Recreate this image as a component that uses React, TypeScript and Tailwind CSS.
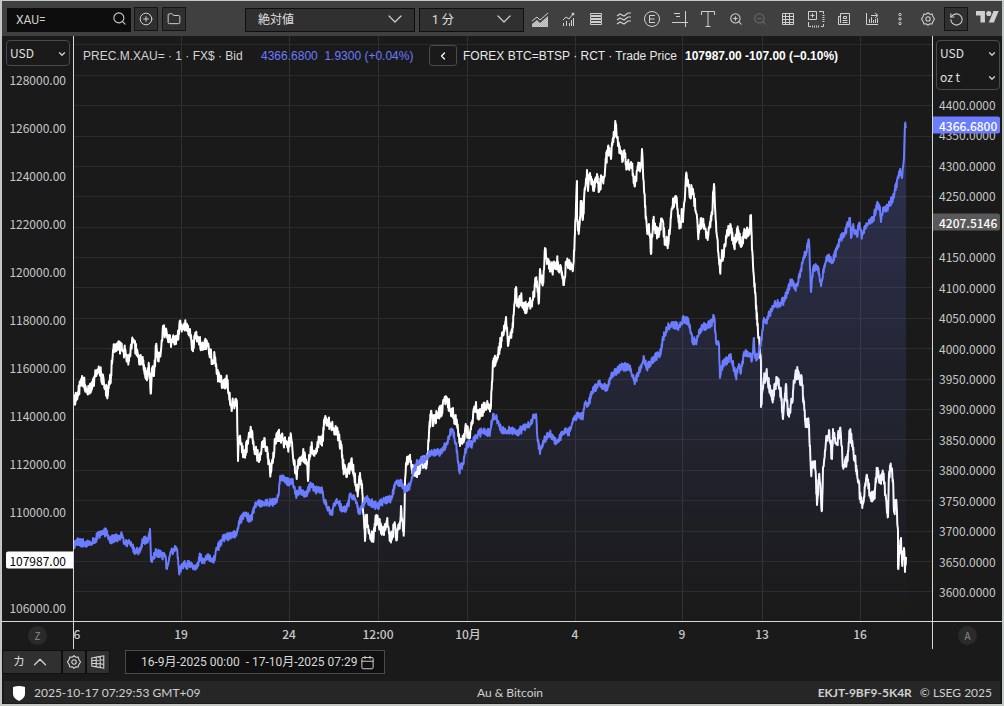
import { useMemo, useState } from "react";
import type { ReactNode } from "react";
import { Calendar, ChevronDown, ChevronLeft, ChevronUp, CirclePlus, Folder, RotateCcw, Search, ZoomIn, ZoomOut } from "lucide-react";

type Point = [x: number, y: number];

// Plot space used by both series and the grid
const PLOT = { x: 74, y: 36, width: 858, height: 585 };

const BTC: Point[] = [
  [74, 403], [78, 392], [83, 380], [87, 390], [92, 389], [97, 370], [101, 374], [104, 384], [108, 394], [111, 375], [113, 350], [119, 347], [125, 352], [129, 361],
  [133, 339], [138, 357], [144, 365], [146, 379], [149, 366], [151, 393], [152, 368], [154, 376], [156, 346], [158, 361], [161, 350], [163, 326], [168, 341], [177, 340],
  [180, 326], [187, 324], [191, 335], [192, 350], [195, 335], [202, 346], [207, 343], [212, 360], [215, 357], [217, 374], [223, 385], [227, 381], [231, 405], [237, 404],
  [238, 461], [239, 438], [244, 455], [251, 431], [255, 450], [260, 460], [263, 441], [267, 447], [270, 472], [273, 461], [275, 439], [280, 435], [288, 448],
  [290, 438], [292, 442], [294, 465], [297, 475], [299, 460], [303, 454], [307, 462], [308, 481], [309, 455], [312, 447], [315, 453], [320, 437], [323, 441], [324, 420],
  [328, 422], [332, 428], [337, 431], [341, 447], [344, 471], [348, 471], [352, 463], [354, 475], [358, 492], [360, 473], [362, 484], [363, 512], [365, 541], [366, 515],
  [369, 530], [373, 538], [376, 519], [380, 525], [384, 535], [387, 520], [390, 541], [395, 525], [396, 538], [400, 522], [401, 506], [403, 531], [404, 531], [405, 480],
  [407, 457], [411, 461], [413, 471], [418, 472], [422, 461], [427, 464], [429, 433], [431, 411], [433, 423], [438, 413], [442, 410], [446, 399], [452, 412], [457, 423],
  [460, 446], [463, 440], [466, 429], [470, 438], [473, 417], [476, 402], [478, 416], [483, 409], [487, 405], [491, 405], [493, 361], [497, 360], [499, 350], [503, 332],
  [506, 317], [508, 346], [512, 332], [514, 310], [516, 287], [517, 306], [521, 298], [524, 310], [528, 305], [533, 300], [536, 279], [539, 302], [540, 269], [543, 283],
  [545, 248], [548, 263], [553, 270], [557, 262], [562, 272], [564, 285], [566, 262], [571, 264], [573, 270], [575, 233], [577, 181], [577, 219], [579, 231], [581, 202],
  [583, 218], [585, 190], [587, 170], [588, 191], [590, 173], [593, 189], [597, 174], [599, 190], [602, 177], [604, 178], [606, 161], [608, 147], [611, 159], [613, 138],
  [616, 124], [618, 146], [622, 158], [624, 151], [627, 167], [631, 162], [635, 186], [637, 171], [641, 164], [642, 149], [644, 190], [647, 230], [649, 224], [651, 254],
  [653, 220], [658, 236], [662, 219], [665, 242], [668, 243], [672, 208], [676, 196], [680, 228], [682, 211], [683, 222], [686, 175], [690, 193], [693, 189], [696, 213],
  [698, 234], [702, 220], [708, 237], [712, 213], [714, 184], [717, 237], [720, 271], [722, 250], [723, 259], [727, 231], [731, 228], [734, 246], [738, 231], [741, 247],
  [745, 233], [749, 234], [751, 215], [752, 250], [755, 293], [758, 333], [761, 363], [761, 407], [764, 379], [767, 375], [772, 400], [777, 380], [781, 393], [783, 419],
  [786, 384], [788, 415], [792, 403], [794, 382], [797, 371], [802, 383], [805, 420], [809, 425], [811, 472], [815, 461], [817, 505], [819, 475], [822, 510], [823, 468],
  [826, 441], [829, 430], [832, 459], [833, 429], [837, 443], [840, 428], [843, 465], [847, 462], [850, 430], [853, 450], [857, 470], [860, 496], [863, 504], [867, 475],
  [870, 496], [874, 499], [877, 471], [880, 483], [883, 474], [886, 499], [888, 517], [889, 474], [891, 468], [893, 480], [894, 512], [896, 500], [898, 530], [898, 567],
  [901, 538], [902, 562], [904, 548], [905, 572], [906, 557],
];

const GOLD: Point[] = [
  [74, 549], [75, 541], [82, 543], [90, 543], [95, 541], [98, 534], [103, 534], [107, 531], [110, 540], [122, 536], [125, 542], [130, 544], [135, 551], [139, 552],
  [143, 541], [148, 539], [150, 529], [151, 561], [156, 552], [165, 557], [167, 569], [171, 551], [177, 549], [179, 572], [182, 565], [190, 565], [196, 569], [200, 556],
  [203, 561], [207, 557], [213, 562], [217, 549], [223, 539], [229, 536], [237, 533], [239, 521], [245, 515], [251, 519], [255, 506], [263, 502], [272, 503], [278, 497],
  [280, 478], [287, 481], [293, 483], [296, 495], [300, 489], [306, 496], [310, 486], [318, 491], [322, 489], [325, 503], [332, 515], [334, 505], [338, 502], [343, 511],
  [348, 506], [350, 496], [355, 498], [359, 514], [362, 507], [366, 499], [370, 502], [377, 506], [383, 502], [392, 498], [395, 483], [402, 484], [405, 491], [410, 485],
  [414, 470], [418, 461], [427, 459], [429, 453], [437, 453], [443, 451], [448, 440], [452, 429], [456, 443], [459, 471], [463, 463], [467, 444], [472, 444], [477, 435],
  [483, 431], [490, 433], [493, 414], [497, 420], [502, 430], [508, 430], [517, 432], [523, 429], [530, 424], [536, 414], [537, 433], [540, 454], [543, 441], [550, 434],
  [557, 443], [563, 433], [570, 431], [573, 419], [578, 416], [583, 417], [585, 403], [588, 406], [592, 392], [595, 388], [600, 384], [607, 389], [611, 376], [617, 370],
  [622, 367], [629, 367], [635, 381], [640, 370], [644, 358], [647, 367], [652, 360], [660, 354], [663, 339], [667, 328], [673, 324], [680, 327], [684, 318], [689, 323],
  [693, 342], [697, 340], [701, 328], [705, 326], [712, 323], [714, 316], [716, 341], [719, 344], [720, 378], [723, 363], [731, 357], [736, 377], [739, 364], [741, 372],
  [744, 352], [750, 353], [752, 360], [754, 338], [755, 358], [758, 357], [762, 335], [764, 318], [767, 320], [773, 306], [784, 301], [791, 281], [795, 289], [799, 278],
  [803, 261], [809, 241], [811, 292], [813, 268], [818, 268], [821, 286], [824, 268], [827, 256], [832, 262], [838, 247], [840, 239], [845, 233], [850, 218], [851, 238],
  [853, 227], [857, 236], [859, 223], [862, 236], [867, 225], [873, 220], [877, 204], [880, 207], [881, 222], [883, 208], [887, 208], [892, 200], [895, 190], [898, 178],
  [900, 169], [902, 178], [904, 157], [905, 125], [906, 128],
];

const GRID_X = [181, 289, 378, 467, 575, 682, 762, 860];
const GRID_Y = [44, 75, 105, 136, 166, 196, 227, 257, 287, 318, 348, 379, 409, 439, 470, 500, 531, 561, 591];
const TIME_LABELS: [number, string][] = [
  [77, "6"], [181, "19"], [289, "24"], [378, "12:00"], [468, "10月"], [575, "4"], [682, "9"], [762, "13"], [860, "16"],
];

const BTC_LAST = 107987;
const GOLD_LAST = 4366.68;
const GOLD_CURSOR = 4207.5146;
const BTC_TICKS = Array.from({ length: 12 }, (_, i) => 128000 - i * 2000);
const GOLD_TICKS = Array.from({ length: 17 }, (_, i) => 4400 - i * 50);

// Adds minute-level wiggle between the key points of a series
function densify(points: Point[], amp: number, seed: number): Point[] {
  let s = seed;
  const rand = () => {
    s = (s * 16807) % 2147483647;
    return s / 2147483647 - 0.5;
  };
  const out: Point[] = [];
  for (let i = 0; i < points.length - 1; i++) {
    const [x0, y0] = points[i];
    const [x1, y1] = points[i + 1];
    out.push([x0, y0]);
    const steps = Math.round((x1 - x0) * 3);
    for (let k = 1; k < steps; k++) {
      const t = k / steps;
      out.push([x0 + (x1 - x0) * t, y0 + (y1 - y0) * t + rand() * amp]);
    }
  }
  out.push(points[points.length - 1]);
  return out;
}

const toPath = (points: Point[]) => "M" + points.map(([x, y]) => `${x.toFixed(1)} ${y.toFixed(1)}`).join("L");

function Glyph({ children, size = 18 }: { children: ReactNode; size?: number }) {
  return (
    <svg width={size} height={size} viewBox="0 0 18 18" fill="none" stroke="currentColor" strokeWidth="1" aria-hidden="true">
      {children}
    </svg>
  );
}

function GearIcon() {
  return (
    <Glyph size={16}>
      <path d="M9 2l2 1.6 2.6-.2.8 2.5L16.3 9l-1.9 3.1-.8 2.5-2.6-.2L9 16l-2-1.6-2.6.2-.8-2.5L1.7 9l1.9-3.1.8-2.5 2.6.2z" strokeWidth="1.2" />
      <circle cx="9" cy="9" r="2.5" strokeWidth="1.2" />
    </Glyph>
  );
}

const TOOLS: { label: string; icon: ReactNode }[] = [
  {
    label: "Chart type",
    icon: (
      <Glyph>
        <defs>
          <pattern id="dots" width="2" height="2" patternUnits="userSpaceOnUse">
            <rect width="1" height="1" fill="#d0d0d0" />
            <rect x="1" y="1" width="1" height="1" fill="#d0d0d0" />
          </pattern>
        </defs>
        <path d="M1 11l5-4 3 3 8-7" />
        <path d="M1 14l5-4 3 3 8-7v11H1z" fill="url(#dots)" stroke="none" />
      </Glyph>
    ),
  },
  {
    label: "Indicators",
    icon: (
      <Glyph>
        <path d="M4.5 16v-3M7.5 16v-5M10.5 16v-3M12.500 16v-6M14.5 16V8" />
        <path d="M4 10l3-3 3 2 4-5" />
        <circle cx="14" cy="4" r="1" fill="currentColor" />
      </Glyph>
    ),
  },
  {
    label: "Rows",
    icon: (
      <Glyph>
        <path d="M3.5 3.5h11v2h-11zM3.5 6.5h11v2h-11zM3.5 9.5h11v2h-11zM3.5 12.5h11v2h-11z" />
      </Glyph>
    ),
  },
  {
    label: "Compare",
    icon: (
      <Glyph>
        <path d="M2 6l3-2 4 2 4-3h3M2 10l3-2 4 2 4-3h3M2 14l3-2 4 2 4-3h3" strokeWidth="1.2" />
      </Glyph>
    ),
  },
  {
    label: "Events",
    icon: (
      <Glyph>
        <circle cx="9" cy="9" r="7.5" />
        <path d="M12 5.5H6.5v7H12M6.5 9h5" />
      </Glyph>
    ),
  },
  {
    label: "Levels",
    icon: (
      <Glyph>
        <path d="M1 12.5h16M14.5 1v16M3 3.5h6M5 6.5h4" />
      </Glyph>
    ),
  },
  {
    label: "Text",
    icon: (
      <Glyph>
        <path d="M2.5 5V1.500h13V5M9 1.5v15M6.5 16.5h5" />
      </Glyph>
    ),
  },
  { label: "Zoom in", icon: <ZoomIn size={14} strokeWidth={1.8} /> },
  { label: "Zoom out", icon: <ZoomOut size={14} strokeWidth={1.8} /> },
  {
    label: "Table",
    icon: (
      <Glyph>
        <path d="M3.5 3.5h11v11h-11zM3.5 6.5h11M3.5 9.5h11M3.5 12.5h11M6.5 3.5v11M10.5 3.5v11" />
      </Glyph>
    ),
  },
  {
    label: "Add pane",
    icon: (
      <Glyph>
        <path d="M1.5 1.5h8v8h-8zM5.5 3.500v4M3.500 5.500h4M12 1.5h4.5V4M1.500 12v4.500H4M14 16.500h2.500V14" />
        <path d="M16.500 5v8M5 16.500h8" strokeDasharray="1 1" strokeWidth="2" />
      </Glyph>
    ),
  },
  {
    label: "News",
    icon: (
      <Glyph>
        <path d="M5.5 3.5h9v11h-11v-8h2M5.5 3.5v9.500M8.5 6.5h3v2h-3zM7.5 10.5h5M7.5 12.5h5" />
      </Glyph>
    ),
  },
  {
    label: "Export chart",
    icon: (
      <Glyph>
        <path d="M3.5 3v11.5H15M6.5 13V9M8.5 13V7M10.5 13v-3M12.5 13V9M14.5 13V8M8 5.5h6M12 3l3 2.5-3 2.500" />
      </Glyph>
    ),
  },
  {
    label: "More",
    icon: (
      <Glyph>
        <circle cx="9" cy="4.500" r="1.200" />
        <circle cx="9" cy="9" r="1.200" />
        <circle cx="9" cy="13.500" r="1.200" />
      </Glyph>
    ),
  },
  { label: "Settings", icon: <GearIcon /> },
];

function ToolbarSelect({ label, value, className }: { label: string; value: string; className: string }) {
  return (
    <div className={`relative h-6 ${className}`}>
      <select aria-label={label} className="h-full w-full appearance-none border border-[#0f0f0f] bg-[#303030] pl-3 text-xs text-[#e0e0e0] outline-none">
        <option>{value}</option>
      </select>
      <ChevronDown size={24} strokeWidth={1.2} className="pointer-events-none absolute top-0 right-2 text-[#d0d0d0]" />
    </div>
  );
}

function UnitSelect({ label, value }: { label: string; value: string }) {
  return (
    <div className="relative h-6">
      <select aria-label={label} className="h-full w-full appearance-none bg-transparent pl-[3px] text-xs text-[#e0e0e0] outline-none">
        <option>{value}</option>
      </select>
      <ChevronDown size={10} strokeWidth={3} className="pointer-events-none absolute top-2 right-[2px] text-[#d0d0d0]" />
    </div>
  );
}

function Toolbar() {
  const [symbol, setSymbol] = useState("XAU=");
  const boxed = "flex h-6 w-6 items-center justify-center border border-[#141414] bg-[#303030]";

  return (
    <header className="flex h-[35px] shrink-0 items-start bg-[#404040] pt-[6px] pl-[5px] text-[#d0d0d0]">
      <div className="relative h-6 w-[124px]">
        <input
          aria-label="Symbol"
          value={symbol}
          onChange={(e) => setSymbol(e.target.value)}
          className="h-full w-full bg-[#0d0d0d] pl-[9px] text-xs text-[#d0d0d0] outline-none"
        />
        <Search size={15} strokeWidth={1.7} className="pointer-events-none absolute top-1 right-1" />
      </div>
      <button aria-label="Add symbol" className={`ml-[3px] ${boxed}`}>
        <CirclePlus size={14} strokeWidth={1.7} />
      </button>
      <button aria-label="Open" className={`ml-1 ${boxed}`}>
        <Folder size={14} strokeWidth={1.7} />
      </button>
      <ToolbarSelect label="Scale" value="絶対値" className="ml-[59px] w-[170px]" />
      <ToolbarSelect label="Interval" value="1 分" className="ml-1 w-[105px]" />
      <div className="ml-[2px] flex flex-1 items-center">
        {TOOLS.map((tool) => (
          <button
            key={tool.label}
            aria-label={tool.label}
            className={`flex h-6 items-center justify-center ${tool.label === "Zoom out" ? "mr-1 w-5 text-[#6a6a6a]" : "w-7"}`}
          >
            {tool.icon}
          </button>
        ))}
        <button aria-label="Reset" className={`ml-[2px] ${boxed}`}>
          <RotateCcw size={15} strokeWidth={1.7} />
        </button>
        <svg viewBox="0 4 36 18" className="mr-[3px] mb-1 ml-auto w-[23px]" fill="currentColor" role="img" aria-label="TradingView">
          <path d="M14 22H7V11H0V4h14v18zM28 22h-8l7.5-18h8L28 22z" />
          <circle cx="20" cy="8" r="4" />
        </svg>
      </div>
    </header>
  );
}

function PriceTag({ value, top, className }: { value: string; top: number; className: string }) {
  return (
    <span className={`absolute flex h-[17px] -translate-y-1/2 items-center ${className}`} style={{ top: `${top}%` }}>
      {value}
    </span>
  );
}

function PricePlot() {
  const btcPath = useMemo(() => toPath(densify(BTC, 13, 17)), []);
  const goldPath = useMemo(() => toPath(densify(GOLD, 8, 91)), []);
  const bottom = PLOT.y + PLOT.height;

  return (
    <svg
      viewBox={`${PLOT.x} ${PLOT.y} ${PLOT.width} ${PLOT.height}`}
      preserveAspectRatio="none"
      className="absolute inset-0 h-full w-full"
      fill="none"
      role="img"
      aria-label="Gold and Bitcoin prices"
    >
      <defs>
        <linearGradient id="goldFill" gradientUnits="userSpaceOnUse" x1="0" y1="124" x2="0" y2={bottom}>
          <stop offset="0" stopColor="#6b7cff" stopOpacity="0.24" />
          <stop offset="1" stopColor="#6b7cff" stopOpacity="0" />
        </linearGradient>
      </defs>
      {GRID_X.map((x) => (
        <path key={x} d={`M${x + 0.5} ${PLOT.y}V${bottom}`} stroke="#303030" />
      ))}
      {GRID_Y.map((y) => (
        <path key={y} d={`M${PLOT.x} ${y + 0.5}H932`} stroke="#2b2b2b" />
      ))}
      <path d={btcPath} stroke="#ffffff" strokeWidth="2" strokeLinejoin="round" />
      <path d={`${goldPath}V${bottom}H${PLOT.x}Z`} fill="url(#goldFill)" />
      <path d={goldPath} stroke="#6b7cff" strokeWidth="2" strokeLinejoin="round" />
    </svg>
  );
}

function Legend() {
  return (
    <div className="absolute top-[9px] left-[9px] flex h-[21px] items-center font-['Liberation_Sans',sans-serif] text-xs whitespace-pre text-[#d4d4d4]">
      <span className="w-[178px]">PREC.M.XAU= · 1 · FX$ · Bid</span>
      <span className="w-[168px] text-[#6b7cff]">4366.6800  1.9300 (+0.04%)</span>
      <button aria-label="Collapse" className="mr-[6px] flex h-[21px] w-7 items-center justify-center rounded-[3px] border border-[#4a4a4a] text-white">
        <ChevronLeft size={12} strokeWidth={2.5} />
      </button>
      <span className="w-[222px] text-[#e8e8e8]">FOREX BTC=BTSP · RCT · Trade Price</span>
      <span className="font-bold text-white">107987.00 -107.00 (−0.10%)</span>
    </div>
  );
}

function Chart() {
  return (
    <main className="grid min-h-0 flex-1 grid-cols-[71px_minmax(0,1fr)_69px] grid-rows-[minmax(0,1fr)_28px] font-['Noto_Sans_CJK_JP',sans-serif] text-xs text-[#c8c8c8]">
      <div className="flex flex-col pt-1">
        <div className="mr-[3px] ml-1 rounded border border-[#4a4a4a]">
          <UnitSelect label="Left currency" value="USD" />
        </div>
        <div className="relative mt-[14px] mb-[13px] flex flex-1 flex-col justify-between">
          {BTC_TICKS.map((tick) => (
            <div key={tick} className="flex h-0 items-center justify-end pr-[7px]">
              {Math.abs(tick - BTC_LAST) > 300 && tick.toFixed(2)}
            </div>
          ))}
          <PriceTag
            value={BTC_LAST.toFixed(2)}
            top={((128000 - BTC_LAST) / 22000) * 100}
            className="right-0 left-1 justify-end rounded-l-[2px] bg-white pr-[7px] text-black"
          />
        </div>
      </div>

      <div className="relative border-x border-[#d8d8d8]">
        <PricePlot />
        <Legend />
      </div>

      <div className="flex flex-col pt-1">
        <div className="mr-[2px] ml-[3px] rounded border border-[#4a4a4a]">
          <UnitSelect label="Right currency" value="USD" />
          <UnitSelect label="Weight" value="oz t" />
        </div>
        <div className="relative mt-[15px] mb-[29px] flex flex-1 flex-col justify-between">
          {GOLD_TICKS.map((tick) => (
            <div key={tick} className="flex h-0 items-center pl-[6px]">
              {Math.abs(tick - GOLD_CURSOR) > 10 && tick.toFixed(4)}
            </div>
          ))}
          <PriceTag
            value={GOLD_LAST.toFixed(4)}
            top={((4400 - GOLD_LAST) / 800) * 100}
            className="right-[2px] left-0 rounded-r-[2px] bg-[#6b7cff] pl-[6px] font-medium text-white"
          />
          <PriceTag
            value={GOLD_CURSOR.toFixed(4)}
            top={((4400 - GOLD_CURSOR) / 800) * 100}
            className="right-[2px] left-0 rounded-r-[2px] bg-[#595959] pl-[6px] font-medium text-white"
          />
        </div>
      </div>

      <div className="flex items-center justify-center border-t border-[#d8d8d8]">
        <button className="h-[19px] w-[19px] rounded-full bg-[#2a2a2a] text-[10px] text-[#8a8a8a]">Z</button>
      </div>
      <div className="relative overflow-hidden border-x border-t border-[#d8d8d8] font-medium">
        {TIME_LABELS.map(([x, label]) => (
          <span key={label} className="absolute top-1 -translate-x-1/2 whitespace-nowrap" style={{ left: `${((x - PLOT.x) / PLOT.width) * 100}%` }}>
            {label}
          </span>
        ))}
      </div>
      <div className="flex items-center justify-center border-t border-[#d8d8d8]">
        <button className="h-[19px] w-[19px] rounded-full bg-[#2a2a2a] text-[10px] text-[#8a8a8a]">A</button>
      </div>
    </main>
  );
}

function RangeBar() {
  const button = "flex h-6 items-center justify-center border border-[#0f0f0f] bg-[#303030]";

  return (
    <div className="flex h-8 shrink-0 items-start pt-px text-xs text-[#d8d8d8]">
      <button className={`w-[60px] gap-1 ${button}`}>
        カ
        <ChevronUp size={22} strokeWidth={1.3} />
      </button>
      <button aria-label="Chart settings" className={`w-6 ${button}`}>
        <GearIcon />
      </button>
      <button aria-label="Data window" className={`w-6 ${button}`}>
        <Glyph size={16}>
          <path d="M2 4.5l5-1v11l-5-1zM7 3.5l8.5-1.5v14L7 14.5M2 7.5l13.500-1M2 10.5l13.5 1M11.5 3v12" strokeWidth="1.2" />
        </Glyph>
      </button>
      <button className="ml-[15px] flex h-6 w-[260px] items-center justify-between border border-[#4a4a4a] bg-[#101010] pr-[9px] pl-[15px] whitespace-pre">
        <span>16-9月-2025 00:00  - 17-10月-2025 07:29</span>
        <Calendar size={15} strokeWidth={1.5} />
      </button>
    </div>
  );
}

function StatusBar() {
  return (
    <footer className="mx-[2px] mb-px grid h-[22px] shrink-0 grid-cols-3 items-center bg-[#262626] pt-[2px] font-[Lato,sans-serif] text-xs text-[#d0d0d0]">
      <div className="flex items-center gap-[9px] pl-[9px]">
        <svg width="12" height="15" viewBox="0 0 12 15" fill="#fff" aria-hidden="true">
          <path d="M0 1Q6-.8 12 1V8Q12 12 6 15Q0 12 0 8Z" />
        </svg>
        <span>2025-10-17 07:29:53 GMT+09</span>
      </div>
      <span className="pl-[16px] text-center">Au &amp; Bitcoin</span>
      <div className="flex justify-end gap-2 pr-2">
        <b>EKJT-9BF9-5K4R</b>
        <span>© LSEG 2025</span>
      </div>
    </footer>
  );
}

export default function App() {
  return (
    <div className="flex h-screen min-h-[420px] flex-col overflow-hidden border-x-2 border-t border-b-2 border-[#c4c8c4] bg-[#1a1a1a] font-[Roboto,'Noto_Sans_CJK_JP',sans-serif]">
      <Toolbar />
      <Chart />
      <RangeBar />
      <StatusBar />
    </div>
  );
}
